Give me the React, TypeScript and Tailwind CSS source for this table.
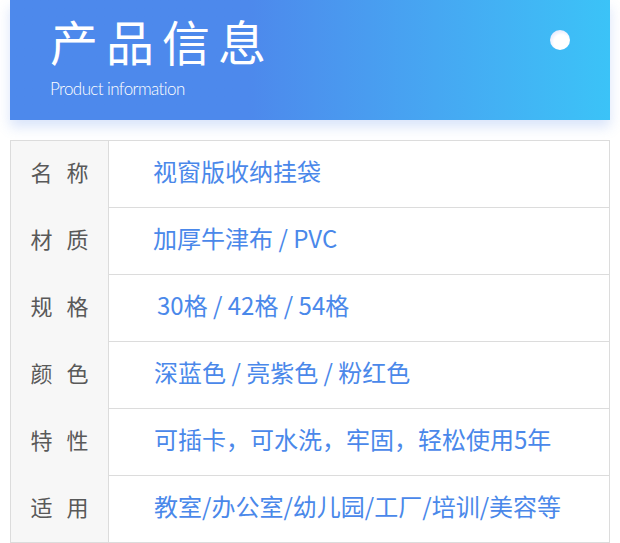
const rows = [
  { label: ['名', '称'], value: '视窗版收纳挂袋', pad: 'pl-[44px]' },
  { label: ['材', '质'], value: '加厚牛津布 / PVC', pad: 'pl-[44px]' },
  { label: ['规', '格'], value: '30格 / 42格 / 54格', pad: 'pl-[48px]' },
  { label: ['颜', '色'], value: '深蓝色 / 亮紫色 / 粉红色', pad: 'pl-[45px]' },
  { label: ['特', '性'], value: '可插卡，可水洗，牢固，轻松使用5年', pad: 'pl-[45px]' },
  { label: ['适', '用'], value: '教室/办公室/幼儿园/工厂/培训/美容等', pad: 'pl-[45px]' },
];

const cjk = "font-['Noto_Sans_CJK_SC',sans-serif]";

export default function App() {
  return (
    <div className={`w-[620px] h-[543px] bg-white overflow-hidden ${cjk}`}>
      {/* header banner */}
      <div className="relative mx-[10px] h-[120px] bg-linear-to-r from-[#4d89ec] from-40% to-[#3bc3f7] shadow-[0_7px_12px_rgba(80,130,230,0.22)]">
        <div className="pl-[40px] pt-[14px]">
          <h1 className="text-[48px] leading-[52px] font-normal tracking-[8px] text-white">产品信息</h1>
          <p className="mt-[13px] font-['Lato',sans-serif] font-light text-[17px] leading-[20px] tracking-[-0.6px] text-white">
            Product information
          </p>
        </div>
        <div className="absolute left-[540px] top-[30px] h-[20px] w-[20px] rounded-full bg-[radial-gradient(circle_at_58%_62%,#ffffff_45%,#dfe5fd_80%,#b9c5f6_100%)]" />
      </div>

      {/* spec table */}
      <div className="mx-[10px] mt-[20px] w-[600px] border border-[#dcdcdc]">
        {rows.map((r, i) => (
          <div key={i} className="flex h-[67px] last:h-[66px]">
            <div className="flex w-[98px] items-center justify-center gap-[14px] border-r border-[#dcdcdc] bg-[#f7f7f7] pb-[6px] text-[22px] text-[#595959]">
              <span>{r.label[0]}</span>
              <span>{r.label[1]}</span>
            </div>
            <div
              className={`flex flex-1 items-center ${r.pad} pb-[6px] text-[24px] text-[#4a88ea] ${
                i < rows.length - 1 ? 'border-b border-[#dcdcdc]' : ''
              }`}
            >
              {r.value}
            </div>
          </div>
        ))}
      </div>
    </div>
  );
}
